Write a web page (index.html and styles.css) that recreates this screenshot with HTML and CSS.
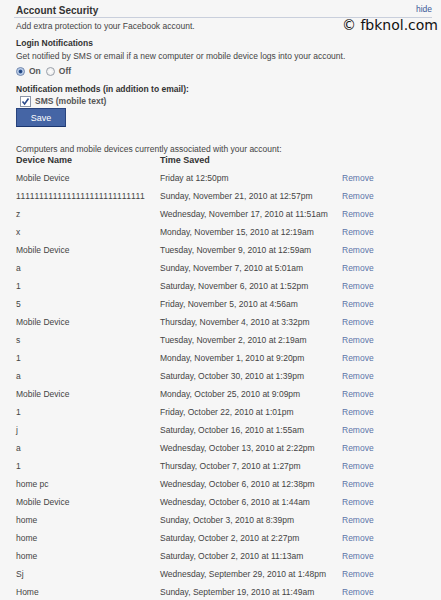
FILE: index.html
```html
<!DOCTYPE html>
<html lang="en">
<head>
    <meta charset="UTF-8">
    <title>Account Security</title>
    <link rel="stylesheet" href="styles.css">
</head>
<body>
    <div class="panel">
        <div class="header">
            <h2>Account Security</h2>
            <a class="hide-link" href="#">hide</a>
        </div>
        <div class="watermark">&copy; fbknol.com</div>
        <p class="intro">Add extra protection to your Facebook account.</p>

        <h3>Login Notifications</h3>
        <p class="desc">Get notified by SMS or email if a new computer or mobile device logs into your account.</p>
        <div class="radios">
            <label><span class="radio checked"></span>On</label>
            <label><span class="radio"></span>Off</label>
        </div>

        <h3 class="methods">Notification methods (in addition to email):</h3>
        <label class="check-row">
            <span class="checkbox">
                <svg width="9" height="9" viewBox="0 0 9 9"><path d="M1.5 4.5 L3.6 7 L7.5 1.5" fill="none" stroke="#2b4a8a" stroke-width="1.6"/></svg>
            </span>
            SMS (mobile text)
        </label>
        <button class="save">Save</button>

        <p class="devices-intro">Computers and mobile devices currently associated with your account:</p>
        <div class="devices">
            <div class="row head"><span>Device Name</span><span>Time Saved</span><span></span></div>
            <div class="row"><span>Mobile Device</span><span>Friday at 12:50pm</span><a href="#">Remove</a></div>
            <div class="row"><span class="ones">1111111111111111111111111111</span><span>Sunday, November 21, 2010 at 12:57pm</span><a href="#">Remove</a></div>
            <div class="row"><span>z</span><span>Wednesday, November 17, 2010 at 11:51am</span><a href="#">Remove</a></div>
            <div class="row"><span>x</span><span>Monday, November 15, 2010 at 12:19am</span><a href="#">Remove</a></div>
            <div class="row"><span>Mobile Device</span><span>Tuesday, November 9, 2010 at 12:59am</span><a href="#">Remove</a></div>
            <div class="row"><span>a</span><span>Sunday, November 7, 2010 at 5:01am</span><a href="#">Remove</a></div>
            <div class="row"><span>1</span><span>Saturday, November 6, 2010 at 1:52pm</span><a href="#">Remove</a></div>
            <div class="row"><span>5</span><span>Friday, November 5, 2010 at 4:56am</span><a href="#">Remove</a></div>
            <div class="row"><span>Mobile Device</span><span>Thursday, November 4, 2010 at 3:32pm</span><a href="#">Remove</a></div>
            <div class="row"><span>s</span><span>Tuesday, November 2, 2010 at 2:19am</span><a href="#">Remove</a></div>
            <div class="row"><span>1</span><span>Monday, November 1, 2010 at 9:20pm</span><a href="#">Remove</a></div>
            <div class="row"><span>a</span><span>Saturday, October 30, 2010 at 1:39pm</span><a href="#">Remove</a></div>
            <div class="row"><span>Mobile Device</span><span>Monday, October 25, 2010 at 9:09pm</span><a href="#">Remove</a></div>
            <div class="row"><span>1</span><span>Friday, October 22, 2010 at 1:01pm</span><a href="#">Remove</a></div>
            <div class="row"><span>j</span><span>Saturday, October 16, 2010 at 1:55am</span><a href="#">Remove</a></div>
            <div class="row"><span>a</span><span>Wednesday, October 13, 2010 at 2:22pm</span><a href="#">Remove</a></div>
            <div class="row"><span>1</span><span>Thursday, October 7, 2010 at 1:27pm</span><a href="#">Remove</a></div>
            <div class="row"><span>home pc</span><span>Wednesday, October 6, 2010 at 12:38pm</span><a href="#">Remove</a></div>
            <div class="row"><span>Mobile Device</span><span>Wednesday, October 6, 2010 at 1:44am</span><a href="#">Remove</a></div>
            <div class="row"><span>home</span><span>Sunday, October 3, 2010 at 8:39pm</span><a href="#">Remove</a></div>
            <div class="row"><span>home</span><span>Saturday, October 2, 2010 at 2:27pm</span><a href="#">Remove</a></div>
            <div class="row"><span>home</span><span>Saturday, October 2, 2010 at 11:13am</span><a href="#">Remove</a></div>
            <div class="row"><span>Sj</span><span>Wednesday, September 29, 2010 at 1:48pm</span><a href="#">Remove</a></div>
            <div class="row"><span>Home</span><span>Sunday, September 19, 2010 at 11:49am</span><a href="#">Remove</a></div>
        </div>
    </div>
</body>
</html>
```

FILE: styles.css
```css
body {
    margin: 0;
    background-color: #f6f6f6;
    font-family: "Liberation Sans", Arial, sans-serif;
    font-size: 8.5px;
    color: #444;
    overflow: hidden;
}
.panel {
    position: relative;
    padding: 2px 9px 0 16px;
}
.header {
    display: flex;
    justify-content: space-between;
    align-items: flex-end;
    border-bottom: 1px solid #c9cfdc;
    margin-left: -2px;
    padding-left: 2px;
    height: 15px;
}
.header h2 {
    margin: 0;
    font-size: 10px;
    font-weight: bold;
    color: #333;
    line-height: 13px;
}
.hide-link {
    color: #3b5998;
    text-decoration: none;
    line-height: 16px;
}
.watermark {
    position: absolute;
    top: 17px;
    right: 3px;
    font-family: "DejaVu Sans", sans-serif;
    font-size: 14px;
    color: #111;
}
p {
    margin: 0;
}
.intro {
    margin-top: 2px;
    line-height: 12px;
}
h3 {
    margin: 5px 0 0;
    font-size: 8.5px;
    font-weight: bold;
    color: #333;
    line-height: 12px;
}
.desc {
    line-height: 12px;
    margin-top: 1px;
}
.radios {
    display: flex;
    gap: 5px;
    margin-top: 3px;
    font-weight: bold;
    color: #555;
    line-height: 12px;
}
.radios label {
    display: flex;
    align-items: center;
    gap: 4px;
}
.radio {
    width: 7px;
    height: 7px;
    border-radius: 50%;
    border: 1px solid #9aa0aa;
    background: radial-gradient(circle, #fff 0, #e4e4e4 100%);
}
.radio.checked {
    background: radial-gradient(circle, #1f3f74 0, #2c5291 30%, #a9bfdf 45%, #eef2f8 100%);
    border-color: #6b83ad;
}
.methods {
    margin-top: 6px;
}
.check-row {
    display: flex;
    align-items: center;
    gap: 4px;
    margin: 0 0 0 4px;
    font-weight: bold;
    color: #555;
    line-height: 12px;
}
.checkbox {
    width: 9px;
    height: 9px;
    border: 1px solid #8c96a8;
    background-color: #fff;
    display: flex;
}
.save {
    display: block;
    margin-top: 1px;
    width: 50px;
    height: 19px;
    border: 1px solid #29447e;
    border-bottom-color: #1a356e;
    background-color: #4565a5;
    color: #fff;
    font-family: "Liberation Sans", Arial, sans-serif;
    font-size: 9px;
    padding: 0;
}
.devices-intro {
    margin-top: 17px;
    margin-bottom: 1px;
    line-height: 10px;
}
.devices {
    display: flex;
    flex-direction: column;
}
.row {
    display: grid;
    grid-template-columns: 144px 182px auto;
    height: 18px;
    align-items: center;
    white-space: nowrap;
}
.row.head {
    height: 10px;
    font-weight: bold;
    font-size: 9px;
    color: #333;
    margin-bottom: 4px;
}
.row .ones {
    letter-spacing: 0.5px;
}
.row a {
    color: #5b74a8;
    text-decoration: none;
}
```
